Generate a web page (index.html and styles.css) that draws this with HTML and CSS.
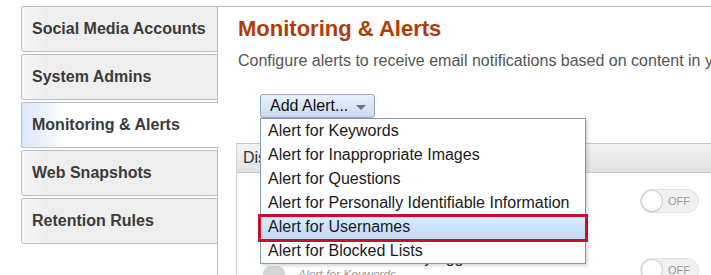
FILE: index.html
```html
<!DOCTYPE html>
<html lang="en">
<head>
    <meta charset="UTF-8">
    <title>Monitoring &amp; Alerts</title>
    <link rel="stylesheet" href="styles.css">
</head>
<body>
    <div class="page">
        <!-- Zakladki -->
        <nav class="tabs">
            <a href="#" class="tab">Social Media Accounts</a>
            <a href="#" class="tab">System Admins</a>
            <a href="#" class="tab active">Monitoring &amp; Alerts</a>
            <a href="#" class="tab">Web Snapshots</a>
            <a href="#" class="tab">Retention Rules</a>
        </nav>

        <main class="content">
            <h2 class="title">Monitoring &amp; Alerts</h2>
            <p class="intro">Configure alerts to receive email notifications based on content in your archive.</p>

            <div class="add-alert">
                <button class="add-btn">Add Alert... <span class="caret"></span></button>
                <ul class="menu">
                    <li>Alert for Keywords</li>
                    <li>Alert for Inappropriate Images</li>
                    <li>Alert for Questions</li>
                    <li>Alert for Personally Identifiable Information</li>
                    <li class="selected">Alert for Usernames</li>
                    <li>Alert for Blocked Lists</li>
                </ul>
            </div>

            <div class="grid">
                <div class="grid-head">Display Name</div>
                <div class="row">
                    <span class="row-icon"></span>
                    <div class="row-text">
                        <div class="row-name">Competitor mentions on public pages</div>
                        <div class="row-type">Alert for Keywords</div>
                    </div>
                    <span class="toggle"><span class="knob"></span>OFF</span>
                </div>
                <div class="row">
                    <span class="row-icon"></span>
                    <div class="row-text">
                        <div class="row-name">Harmful content by aggressive users</div>
                        <div class="row-type">Alert for Keywords</div>
                    </div>
                    <span class="toggle"><span class="knob"></span>OFF</span>
                </div>
            </div>
        </main>
    </div>
</body>
</html>
```

FILE: styles.css
```css
body {
    margin: 0;
    background: #fff;
    font-family: "Liberation Sans", Arial, sans-serif;
    overflow: hidden;
}
.page {
    display: flex;
    padding-top: 6px;
    height: 269px;
    overflow: hidden;
}
.tabs {
    display: flex;
    flex-direction: column;
    gap: 2px;
    width: 197px;
    margin-left: 21px;
    flex-shrink: 0;
}
.tab {
    display: flex;
    align-items: center;
    height: 44px;
    padding-left: 10px;
    border: 1px solid #b9c0cb;
    border-radius: 2px;
    background: linear-gradient(to right, #f7f7f7, #eeeeee 25px, #efefef);
    color: #3b3b3b;
    font-size: 16px;
    font-weight: bold;
    text-decoration: none;
}
.tab.active {
    position: relative;
    z-index: 1;
    border-right: none;
    margin-right: -1px;
    background: linear-gradient(to right, #d9e7f7, #ffffff 45px);
}
.content {
    flex: 1;
    min-width: 0;
    margin-left: -1px;
    padding: 9px 0 0 20px;
    border-top: 1px solid #b9c0cb;
    border-left: 1px solid #b9c0cb;
    overflow: hidden;
}
.title {
    margin: 0;
    font-size: 22px;
    line-height: 26px;
    color: #b23c08;
}
.intro {
    margin: 9px 0 0;
    font-size: 16px;
    line-height: 20px;
    color: #555;
    white-space: nowrap;
}
.add-alert {
    position: relative;
    margin: 23px 0 0 22px;
    height: 24px;
    z-index: 2;
}
.add-btn {
    display: flex;
    align-items: center;
    gap: 8px;
    height: 24px;
    padding: 0 8px 0 9px;
    border: 1px solid #8ea8c6;
    border-radius: 3px;
    background: linear-gradient(#e9f0f9, #c9dbf0);
    font-family: inherit;
    font-size: 16px;
    color: #111;
}
.caret {
    border-left: 5px solid transparent;
    border-right: 5px solid transparent;
    border-top: 5px solid #66768c;
    margin-top: 2px;
}
.menu {
    position: absolute;
    top: 24px;
    left: 0;
    width: 324px;
    margin: 0;
    padding: 0;
    list-style: none;
    background: #fff;
    border: 1px solid #7f9db9;
    box-shadow: 2px 2px 3px rgba(0, 0, 0, 0.15);
}
.menu li {
    position: relative;
    height: 24px;
    line-height: 24px;
    padding-left: 7px;
    font-size: 16px;
    color: #1a1a1a;
}
.menu li.selected {
    background: linear-gradient(#dfedfc, #bcd8f6);
}
.menu li.selected::after {
    content: "";
    position: absolute;
    top: -1px;
    left: -3px;
    right: -3px;
    bottom: -3px;
    border: 3px solid #c8102e;
}
.grid {
    width: 500px;
    margin: 25px 0 0 -2px;
    border-left: 1px solid #cfcfcf;
}
.grid-head {
    height: 28px;
    line-height: 28px;
    padding-left: 6px;
    border-top: 1px solid #c4c4c4;
    border-bottom: 1px solid #c4c4c4;
    background: linear-gradient(#f3f3f3, #e2e2e2);
    font-size: 16px;
    color: #333;
}
.row {
    display: flex;
    align-items: flex-start;
    width: 475px;
    height: 69px;
    padding: 0 13px 0 26px;
    box-sizing: border-box;
}
.row-icon {
    width: 22px;
    height: 24px;
    margin-top: 24px;
    border-radius: 8px 8px 2px 2px;
    background: #d6d6d6;
}
.row-text {
    flex: 1;
    padding: 6px 0 0 13px;
    white-space: nowrap;
}
.row-name {
    font-size: 16px;
    line-height: 20px;
    color: #333;
}
.row-type {
    font-size: 12px;
    font-style: italic;
    color: #999;
}
.toggle {
    display: flex;
    align-items: center;
    gap: 6px;
    width: 54px;
    height: 20px;
    margin-top: 16px;
    padding: 1px 2px 1px 1px;
    border: 1px solid #e2e2e2;
    border-radius: 12px;
    background: #f1f1f1;
    font-size: 11px;
    color: #9a9a9a;
}
.knob {
    width: 20px;
    height: 20px;
    border-radius: 50%;
    background: radial-gradient(circle at 50% 40%, #fff 55%, #ececec);
    box-shadow: 0 0 0 1px #d0d0d0, 0 1px 2px rgba(0, 0, 0, 0.2);
}
```
